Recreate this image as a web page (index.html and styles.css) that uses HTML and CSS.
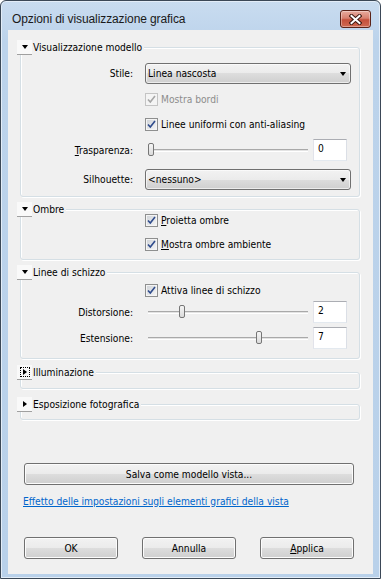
FILE: index.html
```html
<!DOCTYPE html>
<html lang="it">
<head>
  <meta charset="UTF-8" />
  <title>Opzioni di visualizzazione grafica</title>
  <link rel="stylesheet" href="styles.css">
</head>
<body>
  <div class="window">
    <div class="titlebar">
      <span class="title">Opzioni di visualizzazione grafica</span>
      <div class="close-btn">
        <svg width="13" height="11" viewBox="0 0 13 11">
          <path d="M2.5 2 L10.5 9 M10.5 2 L2.5 9" stroke="#3c1810" stroke-width="4" stroke-linecap="square" fill="none"/>
          <path d="M2.5 2 L10.5 9 M10.5 2 L2.5 9" stroke="#ffffff" stroke-width="2" stroke-linecap="square" fill="none"/>
        </svg>
      </div>
    </div>

    <div class="client">
      <!-- Visualizzazione modello -->
      <div class="group g-model">
        <div class="group-head">
          <span class="toggle"><span class="tri-down"></span></span>
          <span class="group-title">Visualizzazione modello</span>
        </div>
        <div class="row mt-8">
          <span class="lbl">Stile:</span>
          <div class="combo"><span>Linea nascosta</span><span class="tri-down"></span></div>
        </div>
        <div class="row mt-5">
          <span></span>
          <span class="check disabled"><span class="box"><svg width="11" height="11" viewBox="0 0 11 11"><path d="M2 5.5 L4.3 8 L9 2" stroke="#a6a6a6" stroke-width="1.6" fill="none"/></svg></span>Mostra bordi</span>
        </div>
        <div class="row mt-4">
          <span></span>
          <span class="check"><span class="box"><svg width="11" height="11" viewBox="0 0 11 11"><path d="M2 5.5 L4.3 8 L9 2" stroke="#2f4b8c" stroke-width="1.6" fill="none"/></svg></span>Linee uniformi con anti-aliasing</span>
        </div>
        <div class="row tall mt-4">
          <span class="lbl"><u>T</u>rasparenza:</span>
          <div class="slide-wrap">
            <div class="slider"><div class="track"></div><div class="thumb" style="left: 3px"></div></div>
            <div class="edit">0</div>
          </div>
        </div>
        <div class="row mt-8">
          <span class="lbl">Silhouette:</span>
          <div class="combo"><span>&lt;nessuno&gt;</span><span class="tri-down"></span></div>
        </div>
      </div>

      <!-- Ombre -->
      <div class="group g-shadow">
        <div class="group-head">
          <span class="toggle"><span class="tri-down"></span></span>
          <span class="group-title">Ombre</span>
        </div>
        <div class="row mt-n7">
          <span></span>
          <span class="check"><span class="box"><svg width="11" height="11" viewBox="0 0 11 11"><path d="M2 5.5 L4.3 8 L9 2" stroke="#2f4b8c" stroke-width="1.6" fill="none"/></svg></span><span><u>P</u>roietta ombre</span></span>
        </div>
        <div class="row mt-3">
          <span></span>
          <span class="check"><span class="box"><svg width="11" height="11" viewBox="0 0 11 11"><path d="M2 5.5 L4.3 8 L9 2" stroke="#2f4b8c" stroke-width="1.6" fill="none"/></svg></span><span><u>M</u>ostra ombre ambiente</span></span>
        </div>
      </div>

      <!-- Linee di schizzo -->
      <div class="group g-sketch">
        <div class="group-head">
          <span class="toggle"><span class="tri-down"></span></span>
          <span class="group-title">Linee di schizzo</span>
        </div>
        <div class="row">
          <span></span>
          <span class="check"><span class="box"><svg width="11" height="11" viewBox="0 0 11 11"><path d="M2 5.5 L4.3 8 L9 2" stroke="#2f4b8c" stroke-width="1.6" fill="none"/></svg></span>Attiva linee di schizzo</span>
        </div>
        <div class="row tall">
          <span class="lbl">Distorsione:</span>
          <div class="slide-wrap">
            <div class="slider"><div class="track"></div><div class="thumb" style="left: 34px"></div></div>
            <div class="edit">2</div>
          </div>
        </div>
        <div class="row tall mt-4">
          <span class="lbl">Estensione:</span>
          <div class="slide-wrap">
            <div class="slider"><div class="track"></div><div class="thumb" style="left: 111px"></div></div>
            <div class="edit">7</div>
          </div>
        </div>
      </div>

      <!-- collapsed groups -->
      <div class="group g-light">
        <div class="group-head">
          <span class="toggle"><span class="focus"><span class="tri-right"></span></span></span>
          <span class="group-title">Illuminazione</span>
        </div>
      </div>

      <div class="group g-photo">
        <div class="group-head">
          <span class="toggle"><span class="tri-right"></span></span>
          <span class="group-title">Esposizione fotografica</span>
        </div>
      </div>

      <button class="btn save-btn">Salva come modello vista...</button>

      <a class="help-link" href="#">Effetto delle impostazioni sugli elementi grafici della vista</a>

      <div class="actions">
        <button class="btn">OK</button>
        <button class="btn">Annulla</button>
        <button class="btn"><u>A</u>pplica</button>
      </div>
    </div>
  </div>
</body>
</html>
```

FILE: styles.css
```css
* {
  box-sizing: border-box;
}

body {
  margin: 0;
  font-family: Tahoma, "DejaVu Sans Condensed", "Liberation Sans", sans-serif;
  font-size: 10.2px;
  color: #000;
  background: #fff;
}

.window {
  width: 381px;
  height: 579px;
  border: 1px solid #3b4857;
  border-radius: 6px 6px 0 0;
  padding: 0 7px 4px;
  background: linear-gradient(#c9dcf0, #bcd3eb 40px, #b9d1ea);
  box-shadow: inset 0 0 0 1px #e3edf8;
  display: flex;
  flex-direction: column;
}

.titlebar {
  height: 29px;
  display: flex;
  align-items: flex-start;
  justify-content: space-between;
}

.title {
  font-family: "Liberation Sans", sans-serif;
  font-size: 12px;
  letter-spacing: -0.1px;
  margin: 11px 0 0 4px;
  color: #1a1a1a;
}

.close-btn {
  width: 31px;
  height: 18px;
  margin: 9px 2px 0 0;
  border: 1px solid #5b2318;
  border-radius: 3px;
  background: linear-gradient(#e8ab9e, #d7806f 45%, #c4503b 55%, #cf6a52);
  box-shadow: inset 0 0 0 1px rgba(255, 255, 255, 0.35);
  display: flex;
  align-items: center;
  justify-content: center;
}

.client {
  flex: 1;
  background: #f0f0f0;
  padding-top: 17px;
}

/* group boxes */
.group {
  margin: 12px 13px 0 12px;
  border: 1px solid #d5dfe5;
  border-radius: 3px;
  box-shadow: inset 1px 1px 0 #fff, 1px 1px 0 #fff;
}

.g-model {
  margin-top: 0;
  padding-bottom: 6px;
}

.g-shadow {
  padding-bottom: 4px;
}

.g-sketch {
  padding-bottom: 9px;
}

.g-light {
  margin-top: 13px;
  padding-bottom: 8px;
}

.g-photo {
  margin-top: 15px;
  padding-bottom: 7px;
}

.group-head {
  display: flex;
  align-items: center;
  height: 15px;
  margin: -8px 0 0 -4px;
}

.toggle {
  width: 15px;
  height: 15px;
  background: #f9f9f9;
  border-bottom: 1px solid #a0a0a0;
  display: flex;
  align-items: center;
  justify-content: center;
}

.group-title {
  background: #f0f0f0;
  padding: 0 2px 0 1px;
  line-height: 15px;
}

.tri-down {
  width: 0;
  height: 0;
  border-top: 4px solid #000;
  border-left: 3.5px solid transparent;
  border-right: 3.5px solid transparent;
}

.tri-right {
  width: 0;
  height: 0;
  border-left: 4px solid #000;
  border-top: 3.5px solid transparent;
  border-bottom: 3.5px solid transparent;
}

.focus {
  width: 10px;
  height: 10px;
  border: 1px dotted #000;
  display: flex;
  align-items: center;
  justify-content: center;
}

/* rows */
.row {
  display: grid;
  grid-template-columns: 112px 1fr;
  column-gap: 12px;
  align-items: center;
  height: 21px;
  padding-right: 8px;
}

.row.tall {
  height: 22px;
}

.mt-8 { margin-top: 8px; }
.mt-5 { margin-top: 5px; }
.mt-4 { margin-top: 4px; }
.mt-3 { margin-top: 3px; }
.mt-n7 { margin-top: -7px; }

.lbl {
  text-align: right;
}

.check {
  display: flex;
  align-items: center;
  gap: 3px;
}

.check.disabled {
  color: #8d8d8d;
}

.box {
  width: 13px;
  height: 13px;
  border: 1px solid #8e8f8f;
  background: linear-gradient(135deg, #cdd1d6, #f7f7f7);
  box-shadow: inset 0 0 0 1px #f4f4f4;
  display: flex;
  align-items: center;
  justify-content: center;
}

.check.disabled .box {
  border-color: #c4c4c4;
  background: #f4f4f4;
}

.combo {
  height: 21px;
  border: 1px solid #707070;
  border-radius: 3px;
  background: linear-gradient(#f2f2f2, #ebebeb 50%, #dddddd 50%, #cfcfcf);
  box-shadow: inset 0 0 0 1px rgba(255, 255, 255, 0.6);
  display: flex;
  align-items: center;
  justify-content: space-between;
  padding: 0 4px 0 2px;
}

/* slider + edit */
.slide-wrap {
  display: flex;
  align-items: center;
}

.slider {
  flex: 1;
  height: 22px;
  margin-right: 2px;
  position: relative;
  display: flex;
  align-items: center;
}

.track {
  flex: 1;
  margin: 0 3px;
  height: 3px;
  border-top: 1px solid #a9a9a9;
  border-bottom: 1px solid #fff;
  background: #e3e3e3;
}

.thumb {
  position: absolute;
  top: 4px;
  width: 6px;
  height: 13px;
  border: 1px solid #767676;
  border-radius: 2px;
  background: linear-gradient(#f6f6f6, #dadada);
}

.edit {
  width: 34px;
  height: 22px;
  margin-right: 4px;
  background: #fff;
  border: 1px solid;
  border-color: #abadb3 #dbdfe6 #e3e9ef #e2e3ea;
  padding: 0 4px;
  line-height: 18px;
}

/* buttons */
.btn {
  height: 22px;
  border: 1px solid #707070;
  border-radius: 3px;
  background: linear-gradient(#f2f2f2, #ebebeb 50%, #dddddd 50%, #cfcfcf);
  box-shadow: inset 0 0 0 1px #fcfcfc;
  font: inherit;
  color: #000;
  text-align: center;
  padding: 0;
}

.save-btn {
  display: block;
  width: 330px;
  margin: 43px 0 0 16px;
}

.help-link {
  display: block;
  margin: 10px 0 0 15px;
  line-height: 14px;
  color: #0066cc;
  text-decoration: underline;
}

.actions {
  display: flex;
  justify-content: space-between;
  margin: 28px 19px 0 16px;
}

.actions .btn {
  width: 94px;
}
```
